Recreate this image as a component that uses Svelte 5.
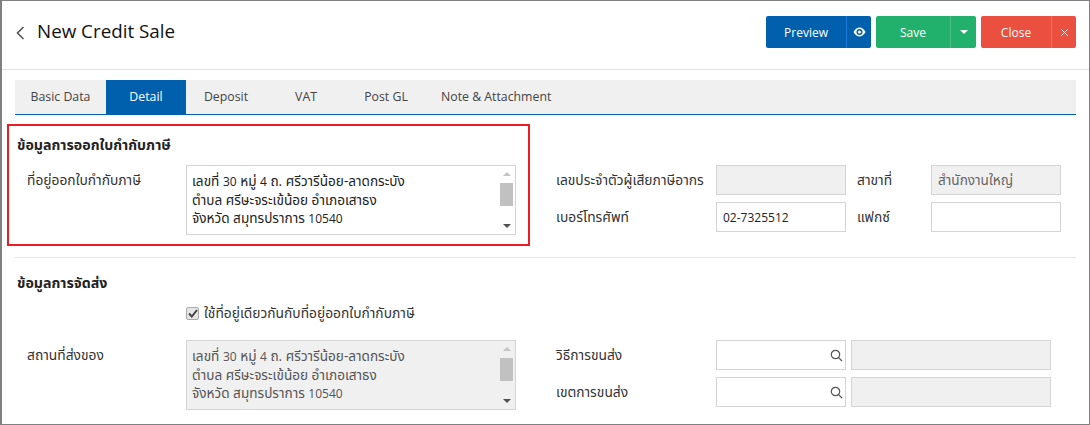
<script>
    const tabs = ["Basic Data", "Detail", "Deposit", "VAT", "Post GL", "Note & Attachment"];
    let active = "Detail";
</script>

{#snippet addressBox(disabled)}
    <div class="area" class:disabled>
        <div class="area-text">
            <div>เลขที่ <span class="num">30</span> หมู่ <span class="num">4</span> ถ. ศรีวารีน้อย-ลาดกระบัง</div>
            <div>ตำบล ศรีษะจระเข้น้อย อำเภอเสาธง</div>
            <div>จังหวัด สมุทรปราการ <span class="num">10540</span></div>
        </div>
        <div class="scroll">
            <span class="arrow up"></span>
            <span class="track"><span class="thumb"></span></span>
            <span class="arrow down"></span>
        </div>
    </div>
{/snippet}

{#snippet lookup()}
    <div class="lookup">
        <input class="field" type="text" />
        <svg class="search" width="13" height="13" viewBox="0 0 13 13" fill="none" stroke="#555" stroke-width="1.2">
            <circle cx="5.5" cy="5.5" r="4.2" />
            <path d="M8.6 8.6 L12 12" />
        </svg>
    </div>
{/snippet}

<div class="page">
    <header>
        <svg class="back" width="9" height="14" viewBox="0 0 9 14" fill="none" stroke="#555" stroke-width="1.6">
            <path d="M7.5 1 L1.5 7 L7.5 13" />
        </svg>
        <h1>New Credit Sale</h1>
        <div class="actions">
            <div class="btn-group blue">
                <button class="main w-preview">Preview</button>
                <button class="side">
                    <svg width="13" height="10" viewBox="0 0 13 10">
                        <path d="M0.5 5 C2.5 1.5 4.5 0.5 6.5 0.5 C8.5 0.5 10.5 1.5 12.5 5 C10.5 8.5 8.5 9.5 6.5 9.5 C4.5 9.5 2.5 8.5 0.5 5 Z" fill="#fff" />
                        <circle cx="6.5" cy="5" r="3" fill="#0060ae" />
                        <circle cx="6.5" cy="5" r="1.6" fill="#fff" />
                    </svg>
                </button>
            </div>
            <div class="btn-group green">
                <button class="main w-save">Save</button>
                <button class="side"><span class="caret"></span></button>
            </div>
            <div class="btn-group red">
                <button class="main w-close">Close</button>
                <button class="side w-x">
                    <svg width="9" height="9" viewBox="0 0 9 9" stroke="#fff" stroke-width="1" opacity="0.85">
                        <path d="M1 1 L8 8 M8 1 L1 8" />
                    </svg>
                </button>
            </div>
        </div>
    </header>

    <nav>
        {#each tabs as tab}
            <div class="tab" class:active={tab === active}>{tab}</div>
        {/each}
    </nav>

    <section class="tax">
        <div class="highlight">
            <h2>ข้อมูลการออกใบกำกับภาษี</h2>
            <div class="row">
                <div class="label">ที่อยู่ออกใบกำกับภาษี</div>
                {@render addressBox(false)}
            </div>
        </div>
        <div class="right-grid">
            <div class="rlabel">เลขประจำตัวผู้เสียภาษีอากร</div>
            <input class="field" type="text" disabled />
            <div class="rlabel second">สาขาที่</div>
            <input class="field thai" type="text" disabled value="สำนักงานใหญ่" />
            <div class="rlabel">เบอร์โทรศัพท์</div>
            <input class="field" type="text" value="02-7325512" />
            <div class="rlabel second">แฟกซ์</div>
            <input class="field" type="text" />
        </div>
    </section>

    <section class="shipping">
        <h2>ข้อมูลการจัดส่ง</h2>
        <div class="same">
            <span class="check">
                <svg width="10" height="9" viewBox="0 0 10 9" fill="none" stroke="#444" stroke-width="2">
                    <path d="M1 4.5 L3.8 7.5 L9 1" />
                </svg>
            </span>
            ใช้ที่อยู่เดียวกันกับที่อยู่ออกใบกำกับภาษี
        </div>
        <div class="ship-row">
            <div class="label">สถานที่ส่งของ</div>
            {@render addressBox(true)}
            <div class="ship-grid">
                <div class="rlabel">วิธีการขนส่ง</div>
                {@render lookup()}
                <input class="field" type="text" disabled />
                <div class="rlabel">เขตการขนส่ง</div>
                {@render lookup()}
                <input class="field" type="text" disabled />
            </div>
        </div>
    </section>
</div>

<style>
    :global(body) {
        margin: 0;
        background: #fff;
    }

    .page {
        width: 1090px;
        height: 425px;
        box-sizing: border-box;
        border: 1px solid #808080;
        border-left-width: 2px;
        overflow: hidden;
        font-family: "Open Sans", "Noto Sans", "Noto Sans Thai", Tahoma, sans-serif;
        font-size: 12px;
        color: #333;
    }

    header {
        height: 69px;
        box-sizing: border-box;
        border-bottom: 1px solid #e2e2e2;
        display: flex;
        align-items: flex-start;
        padding: 15px 13px 0 14px;
    }

    .back {
        margin-top: 10px;
    }

    h1 {
        margin: 2px 0 0 12px;
        font-size: 18.8px;
        font-weight: 400;
        color: #111;
    }

    .actions {
        margin-left: auto;
        display: flex;
        gap: 5px;
    }

    .btn-group {
        display: flex;
        height: 32px;
        border-radius: 2px;
        overflow: hidden;
    }

    .btn-group button {
        border: 0;
        padding: 0;
        height: 32px;
        background: none;
        color: #fff;
        font: inherit;
        display: flex;
        align-items: center;
        justify-content: center;
    }

    .w-preview {
        width: 80px;
    }

    .w-save {
        width: 74px;
    }

    .w-close {
        width: 70px;
    }

    .side {
        width: 26px;
        border-left: 1px solid rgba(255, 255, 255, 0.2) !important;
    }

    .blue .side,
    .side.w-x {
        width: 25px;
    }

    .blue {
        background: #0060ae;
    }

    .blue .side {
        border-left-color: #1a7de0 !important;
    }

    .green {
        background: #21b16c;
    }

    .red {
        background: #ea4f3f;
    }

    .caret {
        width: 0;
        height: 0;
        border-left: 4px solid transparent;
        border-right: 4px solid transparent;
        border-top: 4px solid #fff;
    }

    nav {
        margin: 10px 13px 0 13px;
        height: 35px;
        box-sizing: border-box;
        background: #f0f0f0;
        border-bottom: 1px solid #0060ae;
        display: flex;
    }

    .tab {
        min-width: 80px;
        padding: 0 15px;
        box-sizing: border-box;
        height: 34px;
        line-height: 34px;
        text-align: center;
        color: #444;
        font-size: 12.3px;
    }

    .tab:first-child {
        width: 91px;
    }

    .tab.active {
        background: #0060ae;
        color: #fff;
    }

    .tax {
        display: flex;
        align-items: flex-start;
        padding: 9px 13px 11px 5px;
    }

    .highlight {
        width: 523px;
        height: 122px;
        flex: none;
        box-sizing: border-box;
        border: 2px solid #ed1c24;
        padding: 10px 12px 0 8px;
    }

    h2 {
        margin: 0;
        font-size: 14.2px;
        line-height: 18px;
        font-weight: 700;
        color: #222;
    }

    .row {
        display: flex;
        margin-top: 11px;
    }

    .label {
        width: 159px;
        margin-left: 10px;
        flex: none;
        line-height: 30px;
        font-size: 13.8px;
    }

    .area {
        width: 330px;
        height: 70px;
        box-sizing: border-box;
        border: 1px solid #d4d4d4;
        display: flex;
        flex: none;
        color: #222;
        background: #fff;
    }

    .area.disabled {
        background: #f0f0f0;
        color: #555;
    }

    .area-text {
        flex: 1;
        padding: 6px 0 0 5px;
        line-height: 18px;
        font-size: 13.6px;
        white-space: nowrap;
    }

    .num {
        font-size: 12px;
    }

    .scroll {
        width: 17px;
        display: flex;
        flex-direction: column;
        align-items: center;
    }

    .arrow {
        width: 0;
        height: 0;
        border-left: 4px solid transparent;
        border-right: 4px solid transparent;
        margin: 6px 0;
    }

    .arrow.up {
        border-bottom: 4px solid #c4c4c4;
    }

    .arrow.down {
        border-top: 4px solid #505050;
    }

    .track {
        flex: 1;
        width: 100%;
        display: block;
    }

    .thumb {
        display: block;
        width: 13px;
        height: 23px;
        margin: 1px auto 0;
        background: #c1c1c1;
    }

    .right-grid {
        margin: 41px 0 0 26px;
        display: grid;
        grid-template-columns: 160px 130px 85px 130px;
        grid-auto-rows: 30px;
        row-gap: 7px;
        align-items: center;
    }

    .rlabel {
        line-height: 18px;
        white-space: nowrap;
        font-size: 13.8px;
    }

    .rlabel.second {
        padding-left: 11px;
    }

    .field {
        width: 100%;
        height: 100%;
        box-sizing: border-box;
        border: 1px solid #d4d4d4;
        padding: 0 6px;
        margin: 0;
        background: #fff;
        font: inherit;
        color: #222;
        outline: none;
    }

    .field.thai {
        font-size: 13.6px;
    }

    .field:disabled {
        background: #f0f0f0;
        color: #666;
    }

    .shipping {
        margin: 0 13px 0 13px;
        border-top: 1px solid #e2e2e2;
        padding: 16px 0 0 2px;
    }

    .same {
        margin: 12px 0 0 169px;
        height: 18px;
        line-height: 18px;
        font-size: 13.8px;
        display: flex;
        align-items: center;
        gap: 5px;
    }

    .check {
        width: 11px;
        height: 11px;
        border: 1px solid #aaa;
        border-radius: 2px;
        background: #e6e6e6;
        display: flex;
        align-items: center;
        justify-content: center;
    }

    .ship-row {
        display: flex;
        align-items: flex-start;
        margin-top: 18px;
    }

    .ship-grid {
        margin-left: 40px;
        display: grid;
        grid-template-columns: 160px 130px 205px;
        grid-auto-rows: 30px;
        row-gap: 7px;
        align-items: center;
    }

    .ship-grid > .field {
        width: 200px;
        margin-left: 5px;
    }

    .lookup {
        position: relative;
        height: 100%;
    }

    .search {
        position: absolute;
        right: 3px;
        top: 9px;
    }
</style>
